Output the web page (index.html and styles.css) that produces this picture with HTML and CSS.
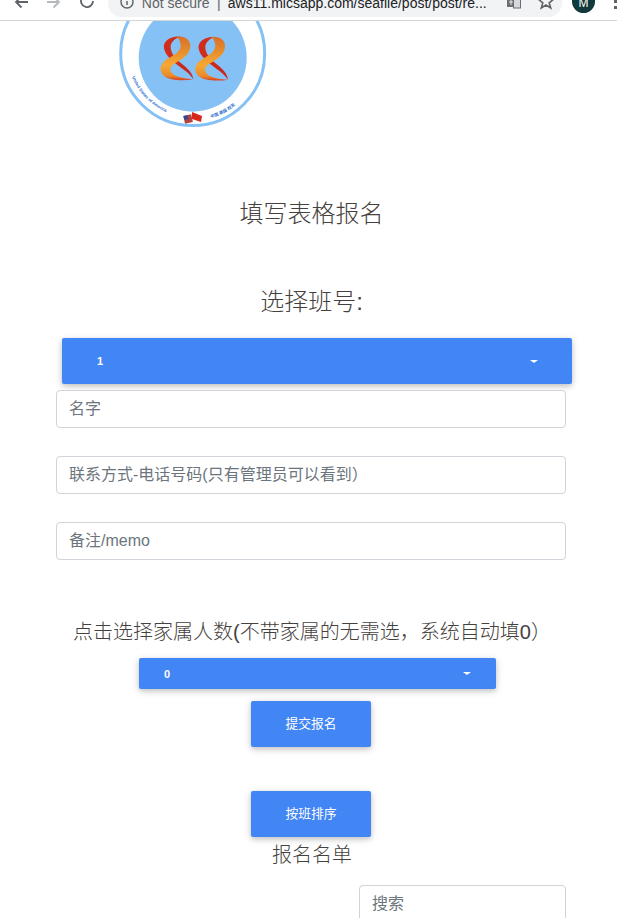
FILE: index.html
```html
<!DOCTYPE html>
<html>
  <head>
    <title>填写表格报名</title>
    <link rel="stylesheet" href="styles.css">
  </head>
  <body>
    <div class="toolbar">
      <div class="nav">
        <svg class="nav-icon" viewBox="0 0 16 16"><path d="M15 2H3M8.500 -3.500 3 2l5.500 5.500" fill="none" stroke="#5f6368" stroke-width="1.800"/></svg>
        <svg class="nav-icon" viewBox="0 0 16 16"><path d="M1 2h12M7.500 -3.500 13 2l-5.500 5.500" fill="none" stroke="#b6b9bd" stroke-width="1.800"/></svg>
        <svg class="nav-icon" viewBox="0 0 16 16"><path d="M14 1a6 6 0 1 1-1.800-4.200M13-5v4H9" fill="none" stroke="#5f6368" stroke-width="1.800"/></svg>
      </div>
      <div class="omnibox">
        <svg class="info-icon" viewBox="0 0 14 14"><circle cx="7" cy="2" r="6" fill="none" stroke="#5f6368" stroke-width="1.400"/><path d="M7 1v4" stroke="#5f6368" stroke-width="1.500"/></svg>
        <span class="not-secure">Not secure</span>
        <span class="sep">|</span>
        <span class="url">aws11.micsapp.com/seafile/post/post/re...</span>
        <svg class="translate-icon" viewBox="0 0 14 14"><rect x="0" y="-3" width="9" height="10" fill="#6b6e72"/><rect x="6.500" y="-3" width="7" height="11" fill="#d5d7da" stroke="#6b6e72"/><path d="M2 2h4M4 0v5" stroke="#e8e9ea"/></svg>
        <svg class="star-icon" viewBox="0 0 16 16"><path d="M8 -7 10 -1 15.500 -.7 11.200 2.800 12.700 8 8 5 3.300 8 4.800 2.800 .5 -.7 6 -1Z" fill="none" stroke="#5f6368" stroke-width="1.600"/></svg>
      </div>
      <div class="avatar">M</div>
      <div class="menu-dots"><i></i><i></i></div>
    </div>

    <div class="page">
      <svg class="logo" viewBox="0 0 150 108">
        <defs>
          <linearGradient id="swoosh-red" x1="0" y1="0" x2="1" y2="1">
            <stop offset="0" stop-color="#d2301c"/>
            <stop offset="1" stop-color="#c9241d"/>
          </linearGradient>
          <linearGradient id="swoosh-orange" x1="0" y1="0" x2="0" y2="1">
            <stop offset="0" stop-color="#d9702a"/>
            <stop offset="0.3" stop-color="#e58a2b"/>
            <stop offset="0.65" stop-color="#f5a933"/>
            <stop offset="0.9" stop-color="#ea8a2a"/>
            <stop offset="1" stop-color="#d9401f"/>
          </linearGradient>
          <g id="eight">
            <path d="M90 20C60 18 38 35 42 55 46 78 70 95 95 115 110 125 122 135 130 148 128 130 115 118 100 105 80 90 60 70 62 48 64 35 75 25 90 20Z" fill="url(#swoosh-red)"/>
            <path d="M80 20C115 16 128 40 118 62 110 80 88 92 72 102 60 110 56 122 70 133 85 143 110 147 130 148 100 153 60 152 42 138 24 120 32 100 50 88 70 76 90 68 92 48 92 36 88 27 80 20Z" fill="url(#swoosh-orange)"/>
          </g>
          <path id="ring-left" d="M14 56A66 66 0 0 0 60 95"/>
          <path id="ring-right" d="M93 97A66 66 0 0 0 133 65"/>
        </defs>
        <circle cx="74.700" cy="32.600" r="72" fill="#fff" stroke="#86c1f5" stroke-width="3"/>
        <circle cx="74.700" cy="36.700" r="54" fill="#86c1f5"/>
        <g transform="translate(32 9) scale(.3333)">
          <use href="#eight"/>
          <use href="#eight" x="104" y="1"/>
        </g>
        <text class="ring-text"><textPath href="#ring-left">United States of America</textPath></text>
        <text class="ring-text"><textPath href="#ring-right">中国 美国 校友</textPath></text>
        <g transform="rotate(-12 75 97)">
          <rect x="66" y="93" width="8" height="8" fill="#b5413c"/>
          <rect x="66" y="93" width="4" height="4" fill="#2b4a8f"/>
        </g>
        <path d="M74 91 84 95 83 101 74 98Z" fill="#d8261c"/>
      </svg>

      <h2 class="form-title">填写表格报名</h2>
      <h2 class="class-title">选择班号:</h2>

      <div class="dropdown dropdown-large">
        <span>1</span>
        <i class="caret"></i>
      </div>

      <div class="fields">
        <div class="field">名字</div>
        <div class="field">联系方式-电话号码(只有管理员可以看到）</div>
        <div class="field">备注/memo</div>
      </div>

      <h3 class="family-title">点击选择家属人数(不带家属的无需选，系统自动填0）</h3>

      <div class="dropdown dropdown-small">
        <span>0</span>
        <i class="caret"></i>
      </div>

      <button class="btn submit-btn">提交报名</button>
      <button class="btn sort-btn">按班排序</button>

      <h3 class="list-title">报名名单</h3>

      <div class="search-row">
        <div class="field search">搜索</div>
      </div>
    </div>
  </body>
</html>
```

FILE: styles.css
```css
html,
body {
  height: 918px;
  overflow: hidden;
}
body {
  margin: 0;
  background: #fff;
  color: #44403d;
  font-family: "Liberation Sans", "Noto Sans CJK SC", sans-serif;
}

/* browser bar, cut off at the top of the shot */
.toolbar {
  height: 20px;
  display: flex;
  align-items: flex-start;
  border-bottom: 1px solid #d4d5d7;
  overflow: hidden;
}
.nav {
  display: flex;
  gap: 17px;
  padding-left: 13px;
  width: 108px;
  box-sizing: border-box;
}
.nav-icon {
  width: 16px;
  height: 16px;
}
.omnibox {
  width: 455px;
  height: 17px;
  padding-left: 12px;
  box-sizing: border-box;
  display: flex;
  align-items: flex-start;
  background: #f1f3f4;
  border-radius: 0 0 14px 14px;
  font-size: 14px;
  line-height: 6px;
  white-space: nowrap;
}
.info-icon {
  flex: none;
  width: 14px;
  height: 14px;
}
.not-secure {
  width: 68px;
  margin-left: 8px;
  color: #5f6368;
}
.sep {
  width: 18px;
  text-align: center;
  color: #5f6368;
}
.url {
  width: 261px;
  color: #202124;
}
.translate-icon {
  flex: none;
  width: 14px;
  height: 14px;
  margin-left: 18px;
}
.star-icon {
  flex: none;
  width: 16px;
  height: 16px;
  margin-left: 17px;
}
.avatar {
  width: 23px;
  height: 13px;
  margin-left: 10px;
  background: #123a3c;
  border-radius: 0 0 12px 12px;
  color: #fff;
  font-size: 12px;
  line-height: 6px;
  text-align: center;
}
.menu-dots {
  display: flex;
  flex-direction: column;
  gap: 3px;
  margin-left: 19px;
}
.menu-dots i {
  width: 3px;
  height: 3px;
  background: #5f6368;
}

.page {
  display: flex;
  flex-direction: column;
  align-items: center;
}
.logo {
  width: 150px;
  height: 108px;
  align-self: flex-start;
  margin-left: 118px;
}
.ring-text {
  font-size: 4.200px;
  font-weight: 700;
  fill: #2f6fd0;
}

h2,
h3 {
  margin: 0;
  font-weight: 300;
  text-align: center;
}
.form-title {
  margin: 70px 0 0 6px;
  font-size: 24px;
  line-height: 30px;
}
.class-title {
  margin: 58px 0 0 6px;
  font-size: 24px;
  line-height: 30px;
}

.dropdown {
  display: flex;
  align-items: center;
  justify-content: space-between;
  box-sizing: border-box;
  background: #4285f4;
  border-radius: 2px;
  color: #fff;
  font-size: 11px;
  font-weight: 700;
  box-shadow: 0 2px 5px 0 rgba(0, 0, 0, .16), 0 2px 10px 0 rgba(0, 0, 0, .12);
}
.dropdown-large {
  width: 510px;
  height: 46px;
  margin: 21px 0 0 17px;
  padding: 0 34px 0 35px;
}
.dropdown-small {
  width: 357px;
  height: 31px;
  margin: 12px 0 0 18px;
  padding: 0 25px;
}
.caret {
  border-top: 3.500px solid #fff;
  border-left: 4px solid transparent;
  border-right: 4px solid transparent;
}

.fields {
  display: flex;
  flex-direction: column;
  gap: 28px;
  margin: 6px 0 0 5px;
}
.field {
  width: 510px;
  height: 38px;
  box-sizing: border-box;
  padding: 0 12px;
  background: #fff;
  border: 1px solid #ced4da;
  border-radius: 4px;
  color: #6c757d;
  font-size: 16px;
  line-height: 35px;
}

.family-title {
  margin: 58px 0 0 7px;
  font-size: 20px;
  line-height: 28px;
}

.btn {
  display: block;
  width: 120px;
  height: 46px;
  padding: 0 0 4px;
  border: 0;
  background: #4285f4;
  border-radius: 2px;
  color: #fff;
  font-family: inherit;
  font-size: 12.800px;
  box-shadow: 0 2px 5px 0 rgba(0, 0, 0, .16), 0 2px 10px 0 rgba(0, 0, 0, .12);
}
.submit-btn {
  margin: 12px 0 0 5px;
}
.sort-btn {
  margin: 44px 0 0 5px;
}

.list-title {
  margin: 4px 0 0 7px;
  font-size: 20px;
  line-height: 28px;
}
.search-row {
  align-self: flex-end;
  margin: 16px 51px 0 0;
}
.search {
  width: 207px;
}
```
